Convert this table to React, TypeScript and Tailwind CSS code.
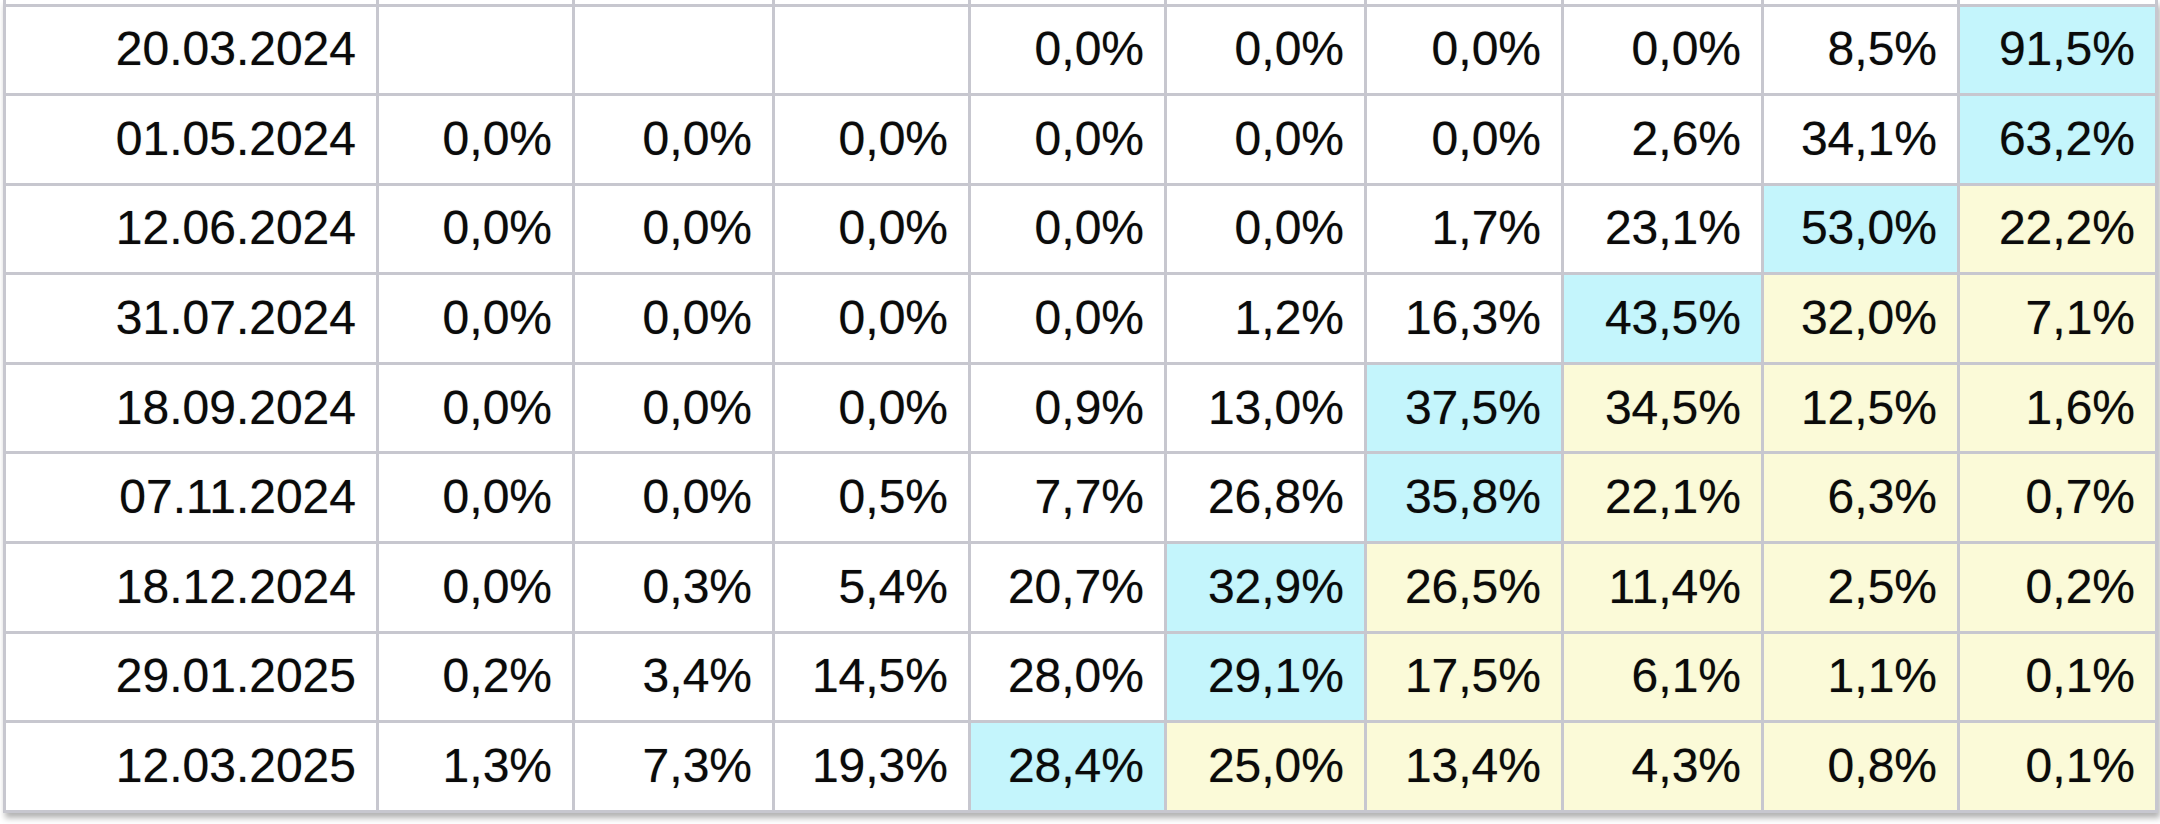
import React from "react";

type Tone = "c" | "y" | "";

interface IRow {
  date: string;
  cells: string[];
  tones: Tone[];
}

// "" = empty cell, c = cyan (peak), y = yellow (after peak)
const rows: IRow[] = [
  {
    date: "20.03.2024",
    cells: ["", "", "", "0,0%", "0,0%", "0,0%", "0,0%", "8,5%", "91,5%"],
    tones: ["", "", "", "", "", "", "", "", "c"],
  },
  {
    date: "01.05.2024",
    cells: ["0,0%", "0,0%", "0,0%", "0,0%", "0,0%", "0,0%", "2,6%", "34,1%", "63,2%"],
    tones: ["", "", "", "", "", "", "", "", "c"],
  },
  {
    date: "12.06.2024",
    cells: ["0,0%", "0,0%", "0,0%", "0,0%", "0,0%", "1,7%", "23,1%", "53,0%", "22,2%"],
    tones: ["", "", "", "", "", "", "", "c", "y"],
  },
  {
    date: "31.07.2024",
    cells: ["0,0%", "0,0%", "0,0%", "0,0%", "1,2%", "16,3%", "43,5%", "32,0%", "7,1%"],
    tones: ["", "", "", "", "", "", "c", "y", "y"],
  },
  {
    date: "18.09.2024",
    cells: ["0,0%", "0,0%", "0,0%", "0,9%", "13,0%", "37,5%", "34,5%", "12,5%", "1,6%"],
    tones: ["", "", "", "", "", "c", "y", "y", "y"],
  },
  {
    date: "07.11.2024",
    cells: ["0,0%", "0,0%", "0,5%", "7,7%", "26,8%", "35,8%", "22,1%", "6,3%", "0,7%"],
    tones: ["", "", "", "", "", "c", "y", "y", "y"],
  },
  {
    date: "18.12.2024",
    cells: ["0,0%", "0,3%", "5,4%", "20,7%", "32,9%", "26,5%", "11,4%", "2,5%", "0,2%"],
    tones: ["", "", "", "", "c", "y", "y", "y", "y"],
  },
  {
    date: "29.01.2025",
    cells: ["0,2%", "3,4%", "14,5%", "28,0%", "29,1%", "17,5%", "6,1%", "1,1%", "0,1%"],
    tones: ["", "", "", "", "c", "y", "y", "y", "y"],
  },
  {
    date: "12.03.2025",
    cells: ["1,3%", "7,3%", "19,3%", "28,4%", "25,0%", "13,4%", "4,3%", "0,8%", "0,1%"],
    tones: ["", "", "", "c", "y", "y", "y", "y", "y"],
  },
];

const colWidths = [
  "w-[373px]",
  "w-[196px]",
  "w-[200px]",
  "w-[196px]",
  "w-[196px]",
  "w-[200px]",
  "w-[197px]",
  "w-[200px]",
  "w-[196px]",
  "w-[198px]",
];

const toneClass = (tone: Tone) => {
  if (tone === "c") return "bg-[#c4f5fc]";
  if (tone === "y") return "bg-[#fbfad8]";
  return "bg-white";
};

const cellBase =
  "border-[3px] border-[#c7c7cf] pr-[20px] pl-2 pb-[1px] text-right align-middle leading-none";

const App = () => {
  return (
    <div className="w-[2160px] h-[824px] overflow-hidden bg-white font-['Liberation_Sans',Arial,sans-serif] text-[48px] text-[#0a0a0a] [text-shadow:0_0_1px_rgba(0,0,0,0.45)]">
      <table className="ml-[3px] border-collapse table-fixed shadow-[2px_5px_6px_rgba(0,0,0,0.3)]">
        <colgroup>
          {colWidths.map((w, i) => (
            <col key={i} className={w} />
          ))}
        </colgroup>
        <tbody>
          {/* tail of the row scrolled out above */}
          <tr className="h-[5px]">
            {colWidths.map((_, i) => (
              <td key={i} className="border-x-[3px] border-b-[3px] border-[#c7c7cf] bg-white p-0" />
            ))}
          </tr>
          {rows.map((row) => (
            <tr key={row.date} className="h-[89.6px]">
              <td className={`${cellBase} bg-white`}>{row.date}</td>
              {row.cells.map((value, i) => (
                <td key={i} className={`${cellBase} ${toneClass(row.tones[i])}`}>
                  {value}
                </td>
              ))}
            </tr>
          ))}
        </tbody>
      </table>
    </div>
  );
};

export default App;
